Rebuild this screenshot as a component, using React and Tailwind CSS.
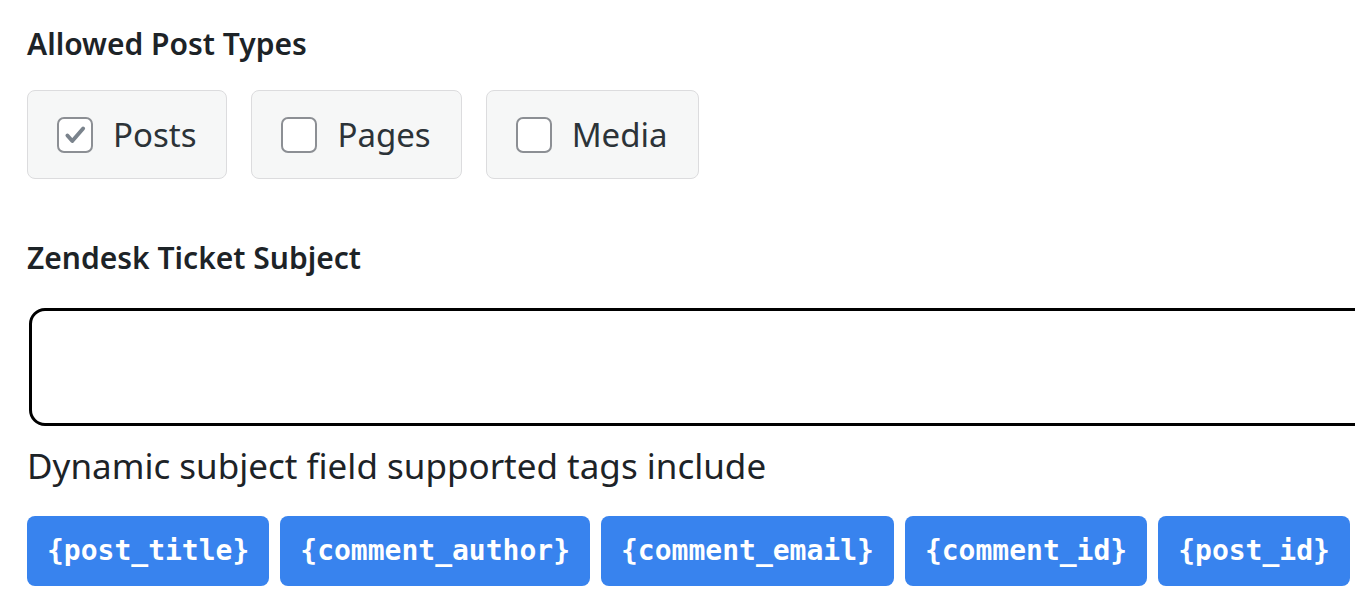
import React from 'react'

const TYPES = [
  { label: 'Posts', checked: true },
  { label: 'Pages', checked: false },
  { label: 'Media', checked: false },
]

const TAGS = ['{post_title}', '{comment_author}', '{comment_email}', '{comment_id}', '{post_id}']

function Checkbox({ checked }) {
  return (
    <span className="flex h-[36px] w-[36px] shrink-0 items-center justify-center rounded-[7px] border-2 border-[#8c8f94] bg-white">
      {checked && (
        <svg width="26" height="26" viewBox="0 0 24 24" fill="none">
          <path d="M5 12.5l4.5 5L19.5 6" stroke="#7a838c" strokeWidth="3.6" strokeLinecap="round" strokeLinejoin="round" />
        </svg>
      )}
    </span>
  )
}

export default function App() {
  return (
    <div
      className="h-[610px] w-[1355px] overflow-hidden bg-white pl-[27px] pt-[27px] text-[#1d2327]"
      style={{ fontFamily: '"Noto Sans", "Open Sans", sans-serif' }}
    >
      <h3 className="text-[30px] font-semibold leading-[34px]">Allowed Post Types</h3>

      <div className="mt-[29px] flex gap-[24px]">
        {TYPES.map((t) => (
          <label
            key={t.label}
            className="flex h-[89px] items-center gap-[20px] rounded-[8px] border border-[#dcdcde] bg-[#f6f7f7] pl-[29px] pr-[30px]"
          >
            <Checkbox checked={t.checked} />
            <span className="text-[33px] leading-none text-[#2c3338]">{t.label}</span>
          </label>
        ))}
      </div>

      <h3 className="mt-[62px] text-[30px] font-semibold leading-[34px]">Zendesk Ticket Subject</h3>

      <div className="ml-[2px] mt-[33px] h-[118px] w-[1400px] rounded-[16px] border-[3px] border-black bg-white" />

      <p className="mt-[19px] text-[35px] leading-[42px]">Dynamic subject field supported tags include</p>

      <div className="mt-[29px] flex gap-[11px]">
        {TAGS.map((tag) => (
          <span
            key={tag}
            className="flex h-[70px] shrink-0 items-center rounded-[8px] bg-[#3883ee] px-[20px] text-[28px] font-bold text-white"
            style={{ fontFamily: '"DejaVu Sans Mono", "Liberation Mono", monospace' }}
          >
            {tag}
          </span>
        ))}
      </div>
    </div>
  )
}
